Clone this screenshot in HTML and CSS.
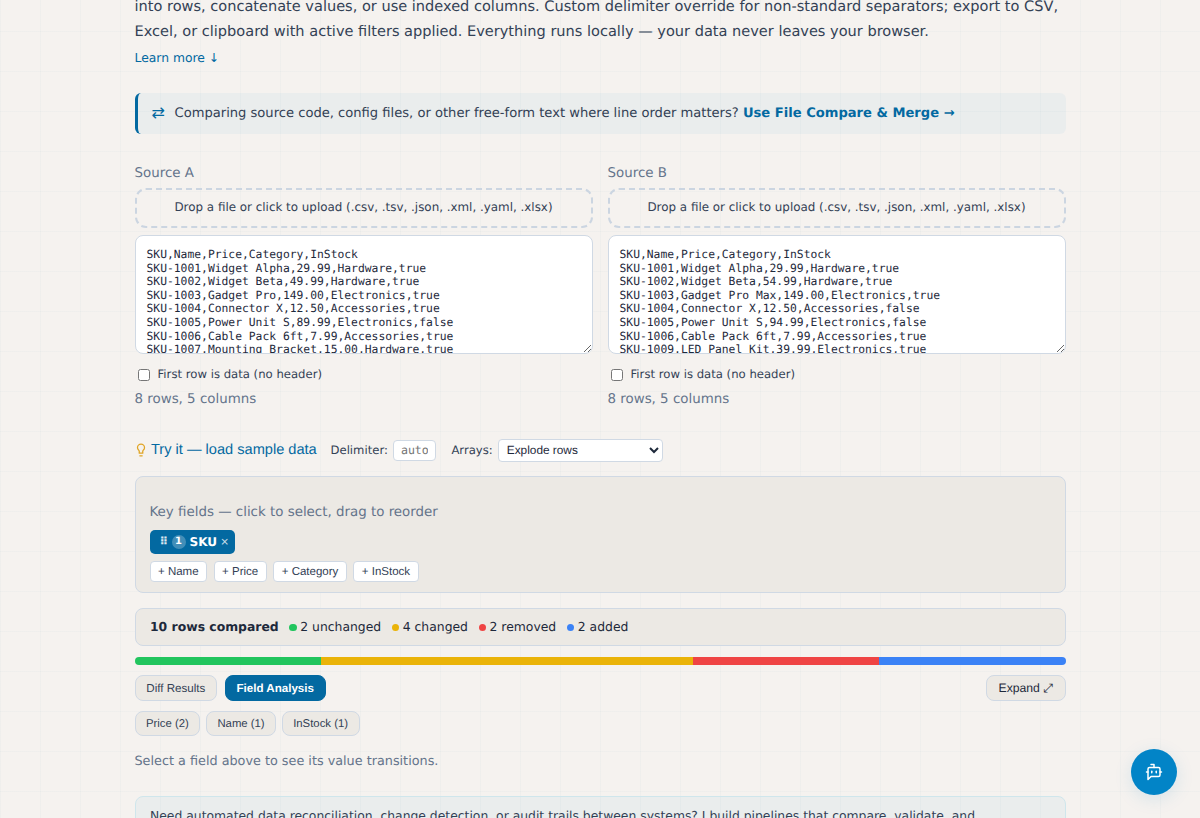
FILE: index.html
```html
<!DOCTYPE html>
<html lang="en">
<head>
<meta charset="utf-8">
<title>Data Compare</title>
<link rel="stylesheet" href="styles.css">
</head>
<body>
<main class="page">
  <p class="intro">into rows, concatenate values, or use indexed columns. Custom delimiter override for non-standard separators; export to CSV,<br>Excel, or clipboard with active filters applied. Everything runs locally — your data never leaves your browser.</p>
  <a class="learn">Learn more ↓</a>

  <aside class="banner">
    <span class="banner-icon">⇄</span>
    <span class="banner-text">Comparing source code, config files, or other free-form text where line order matters? <a class="banner-link">Use File Compare &amp; Merge →</a></span>
  </aside>

  <section class="sources">
    <div class="source">
      <label class="source-label">Source A</label>
      <div class="drop">Drop a file or click to upload (.csv, .tsv, .json, .xml, .yaml, .xlsx)</div>
      <textarea class="input" spellcheck="false">SKU,Name,Price,Category,InStock
SKU-1001,Widget Alpha,29.99,Hardware,true
SKU-1002,Widget Beta,49.99,Hardware,true
SKU-1003,Gadget Pro,149.00,Electronics,true
SKU-1004,Connector X,12.50,Accessories,true
SKU-1005,Power Unit S,89.99,Electronics,false
SKU-1006,Cable Pack 6ft,7.99,Accessories,true
SKU-1007,Mounting Bracket,15.00,Hardware,true</textarea>
      <label class="check"><input type="checkbox" class="box"><span>First row is data (no header)</span></label>
      <div class="stats">8 rows, 5 columns</div>
    </div>
    <div class="source">
      <label class="source-label">Source B</label>
      <div class="drop">Drop a file or click to upload (.csv, .tsv, .json, .xml, .yaml, .xlsx)</div>
      <textarea class="input" spellcheck="false">SKU,Name,Price,Category,InStock
SKU-1001,Widget Alpha,29.99,Hardware,true
SKU-1002,Widget Beta,54.99,Hardware,true
SKU-1003,Gadget Pro Max,149.00,Electronics,true
SKU-1004,Connector X,12.50,Accessories,false
SKU-1005,Power Unit S,94.99,Electronics,false
SKU-1006,Cable Pack 6ft,7.99,Accessories,true
SKU-1009,LED Panel Kit,39.99,Electronics,true</textarea>
      <label class="check"><input type="checkbox" class="box"><span>First row is data (no header)</span></label>
      <div class="stats">8 rows, 5 columns</div>
    </div>
  </section>

  <section class="toolbar">
    <button class="sample">
      <svg class="bulb" viewBox="0 0 24 24" fill="none" stroke="currentColor" stroke-width="2.2" stroke-linecap="round" stroke-linejoin="round"><path d="M15 14c.2-1 .7-1.700 1.500-2.500 1-.9 1.500-2.200 1.500-3.500A6 6 0 0 0 6 8c0 1 .2 2.200 1.500 3.500.7.7 1.300 1.500 1.500 2.500v3.500h6z"/><path d="M10 22h4"/></svg>
      <span>Try it — load sample data</span>
    </button>
    <label class="field field-delim"><span>Delimiter:</span><input class="delim" placeholder="auto"></label>
    <label class="field"><span>Arrays:</span><select class="arrays"><option>Explode rows</option></select></label>
  </section>

  <section class="keys">
    <div class="keys-title">Key fields — click to select, drag to reorder</div>
    <div class="key-row"><span class="key"><span class="grip">⠿</span><span class="num">1</span><span class="key-name">SKU</span><span class="close">×</span></span></div>
    <div class="add-row">
      <button class="add">+ Name</button>
      <button class="add">+ Price</button>
      <button class="add">+ Category</button>
      <button class="add">+ InStock</button>
    </div>
  </section>

  <section class="summary">
    <strong class="total">10 rows compared</strong>
    <span class="count"><i class="dot green"></i>2 unchanged</span>
    <span class="count"><i class="dot amber"></i>4 changed</span>
    <span class="count"><i class="dot red"></i>2 removed</span>
    <span class="count"><i class="dot blue"></i>2 added</span>
  </section>

  <div class="bar"><i class="green" style="flex:2"></i><i class="amber" style="flex:4"></i><i class="red" style="flex:2"></i><i class="blue" style="flex:2"></i></div>

  <nav class="tabs">
    <button class="tab">Diff Results</button>
    <button class="tab active">Field Analysis</button>
    <button class="tab expand">Expand ⤢</button>
  </nav>
  <div class="chips">
    <button class="chip">Price (2)</button>
    <button class="chip">Name (1)</button>
    <button class="chip">InStock (1)</button>
  </div>
  <p class="hint">Select a field above to see its value transitions.</p>

  <section class="cta">Need automated data reconciliation, change detection, or audit trails between systems? I build pipelines that compare, validate, and</section>
</main>
<button class="chat" aria-label="Chat">
  <svg class="bot" viewBox="0 0 24 24" fill="none" stroke="currentColor" stroke-width="2" stroke-linecap="round" stroke-linejoin="round"><path d="M12 6V2H8"/><path d="m8 18-4 4V8a2 2 0 0 1 2-2h12a2 2 0 0 1 2 2v8a2 2 0 0 1-2 2Z"/><path d="M2 12h2"/><path d="M9 11v2"/><path d="M15 11v2"/><path d="M20 12h2"/></svg>
</button>
</body>
</html>
```
FILE: styles.css
```css
* { box-sizing: border-box; text-rendering: geometricPrecision; }
html { height: 818px; overflow: hidden; }
body {
  margin: 0;
  height: 818px;
  overflow: hidden;
  color: #334155;
  font-family: "DejaVu Sans", sans-serif;
  background-color: #f5f2ef;
  background-image:
    linear-gradient(rgba(14, 116, 144, 0.022) 1px, transparent 1px),
    linear-gradient(90deg, rgba(14, 116, 144, 0.022) 1px, transparent 1px);
  background-size: 40px 40px;
  background-position: 0 31px;
}
button { font-family: "Liberation Sans", Arial, sans-serif; margin: 0; white-space: nowrap; }
.page { width: 931px; margin-left: 134.500px; display: flex; flex-direction: column; }

.intro { margin: -6.500px 0 0; font-size: 14.560px; line-height: 25.700px; white-space: nowrap; }
.learn { margin-top: 4.500px; height: 18px; line-height: 18px; font-size: 12.350px; color: #0369a1; }

.banner {
  margin-top: 26px;
  height: 41px;
  display: flex;
  align-items: center;
  padding: 0 0 0 13px;
  border-left: 3px solid #0369a1;
  border-radius: 6px;
  background: rgba(2, 132, 199, 0.045);
  font-size: 13.100px;
  white-space: nowrap;
}
.banner-icon { width: 24px; padding: 0 0 2px 1px; font-size: 16px; color: #0369a1; }
.banner-link { color: #0369a1; font-weight: bold; }

.sources { margin-top: 28px; display: grid; grid-template-columns: 1fr 1fr; gap: 15px; }
.source { display: flex; flex-direction: column; }
.source-label { height: 22px; line-height: 23px; font-size: 13.400px; color: #64748b; }
.drop {
  margin-top: 4px;
  height: 40px;
  display: flex;
  align-items: center;
  justify-content: center;
  padding-bottom: 2px;
  border: 2px dashed #cbd5e1;
  border-radius: 11px;
  font-size: 11.900px;
  white-space: nowrap;
}
.input {
  margin: 7px 0 0;
  height: 119px;
  padding: 11.600px 11px;
  border: 1px solid #d0d9e4;
  border-radius: 8px;
  background: #fff;
  color: #1e293b;
  font: 11.340px/13.600px "DejaVu Sans Mono", monospace;
  white-space: pre;
  overflow: hidden;
  resize: vertical;
}
.check { margin-top: 11px; height: 18px; display: flex; align-items: center; gap: 8px; font-size: 11.670px; }
.box { margin: 1px 0 0 3px; width: 12px; height: 12px; }
.stats { margin-top: 5px; height: 22px; line-height: 23px; font-size: 13.400px; color: #64748b; }

.toolbar { margin-top: 28px; height: 24px; display: flex; align-items: center; white-space: nowrap; }
.sample { padding: 0; border: 0; background: none; display: flex; align-items: center; gap: 3.500px; width: 182px; font-size: 14.600px; color: #0369a1; }
.bulb { flex: none; width: 14px; height: 14px; margin-left: -1px; color: #e0a526; }
.field { display: flex; align-items: center; gap: 5px; font-size: 11.650px; }
.field-delim { margin: 0 15px 0 14px; }
.delim { width: 43.500px; height: 21px; padding: 0 7px; border: 1px solid #d0d9e4; border-radius: 4px; background: #fff; font: 11.600px "DejaVu Sans Mono", monospace; }
.arrays { width: 165px; height: 23px; padding: 0 4px; border: 1px solid #d0d9e4; border-radius: 4px; background: #fff; color: #1e293b; font: 11.850px "Liberation Sans", Arial, sans-serif; }

.keys { margin-top: 14px; height: 117px; padding: 25px 14px 0; border: 1px solid #d0d9e4; border-radius: 8px; background: #ece9e4; }
.keys-title { height: 22px; line-height: 22px; font-size: 13.400px; color: #64748b; }
.key-row { margin-top: 6px; display: flex; }
.key { height: 24px; width: 85px; padding: 0 0 1px 10px; display: flex; align-items: center; border-radius: 5px; background: #0369a1; color: #fff; font-size: 12.100px; font-weight: bold; }
.grip { width: 12px; font-size: 11px; opacity: .85; }
.num { width: 14px; height: 14px; line-height: 14px; border-radius: 50%; background: rgba(255, 255, 255, .25); font-size: 10px; text-align: center; }
.key-name { margin-left: 4px; }
.close { margin-left: 3px; font-size: 10.500px; font-weight: normal; opacity: .8; }
.add-row { margin-top: 7px; display: flex; gap: 6.500px; }
.add { height: 21px; padding: 0 7.500px; border: 1px solid #d0d9e4; border-radius: 4px; background: #fff; color: #334155; font-size: 11.500px; }

.summary { margin-top: 15px; height: 38px; padding: 0 0 1px 14.500px; display: flex; align-items: center; border: 1px solid #d0d9e4; border-radius: 8px; background: #ece9e4; color: #1e293b; font-size: 12.400px; white-space: nowrap; }
.count { margin-left: 10.500px; display: flex; align-items: center; gap: 3.500px; }
.dot { width: 7.500px; height: 7.500px; border-radius: 50%; margin-top: 1px; }
.green { background: #22c55e; }
.amber { background: #eab308; }
.red { background: #ef4444; }
.blue { background: #3b82f6; }
.bar { margin-top: 11px; height: 7.500px; display: flex; border-radius: 4px; overflow: hidden; }

.tabs { margin-top: 10.500px; display: flex; gap: 7.500px; }
.tab { height: 26px; padding: 0 10.800px; border: 1px solid #d0d9e4; border-radius: 8px; background: #ece9e4; color: #334155; font-size: 11.600px; }
.active { background: #0369a1; border-color: #0369a1; color: #fff; font-weight: bold; }
.expand { margin-left: auto; padding: 0 11.500px; font-size: 12.200px; color: #1e293b; }
.chips { margin-top: 10px; display: flex; gap: 5.500px; }
.chip { height: 25px; padding: 0 10.500px; border: 1px solid #d0d9e4; border-radius: 8px; background: #ece9e4; color: #334155; font-size: 11.350px; }
.hint { margin: 15px 0 0; height: 22px; line-height: 22px; font-size: 12.810px; color: #64748b; }
.cta { margin-top: 23px; height: 80px; padding: 8px 14.500px; border: 1px solid #cfe6ec; border-radius: 8px; background: rgba(2, 132, 199, .045); font-size: 12.370px; line-height: 22px; white-space: nowrap; }

.chat { position: fixed; left: 1131.400px; top: 749.400px; width: 46px; height: 46px; padding: 0; display: grid; place-items: center; border: 0; border-radius: 50%; background: #0284c7; color: #fff; box-shadow: 0 4px 18px rgba(2, 132, 199, .13); }
.bot { width: 18px; height: 18px; }
```
